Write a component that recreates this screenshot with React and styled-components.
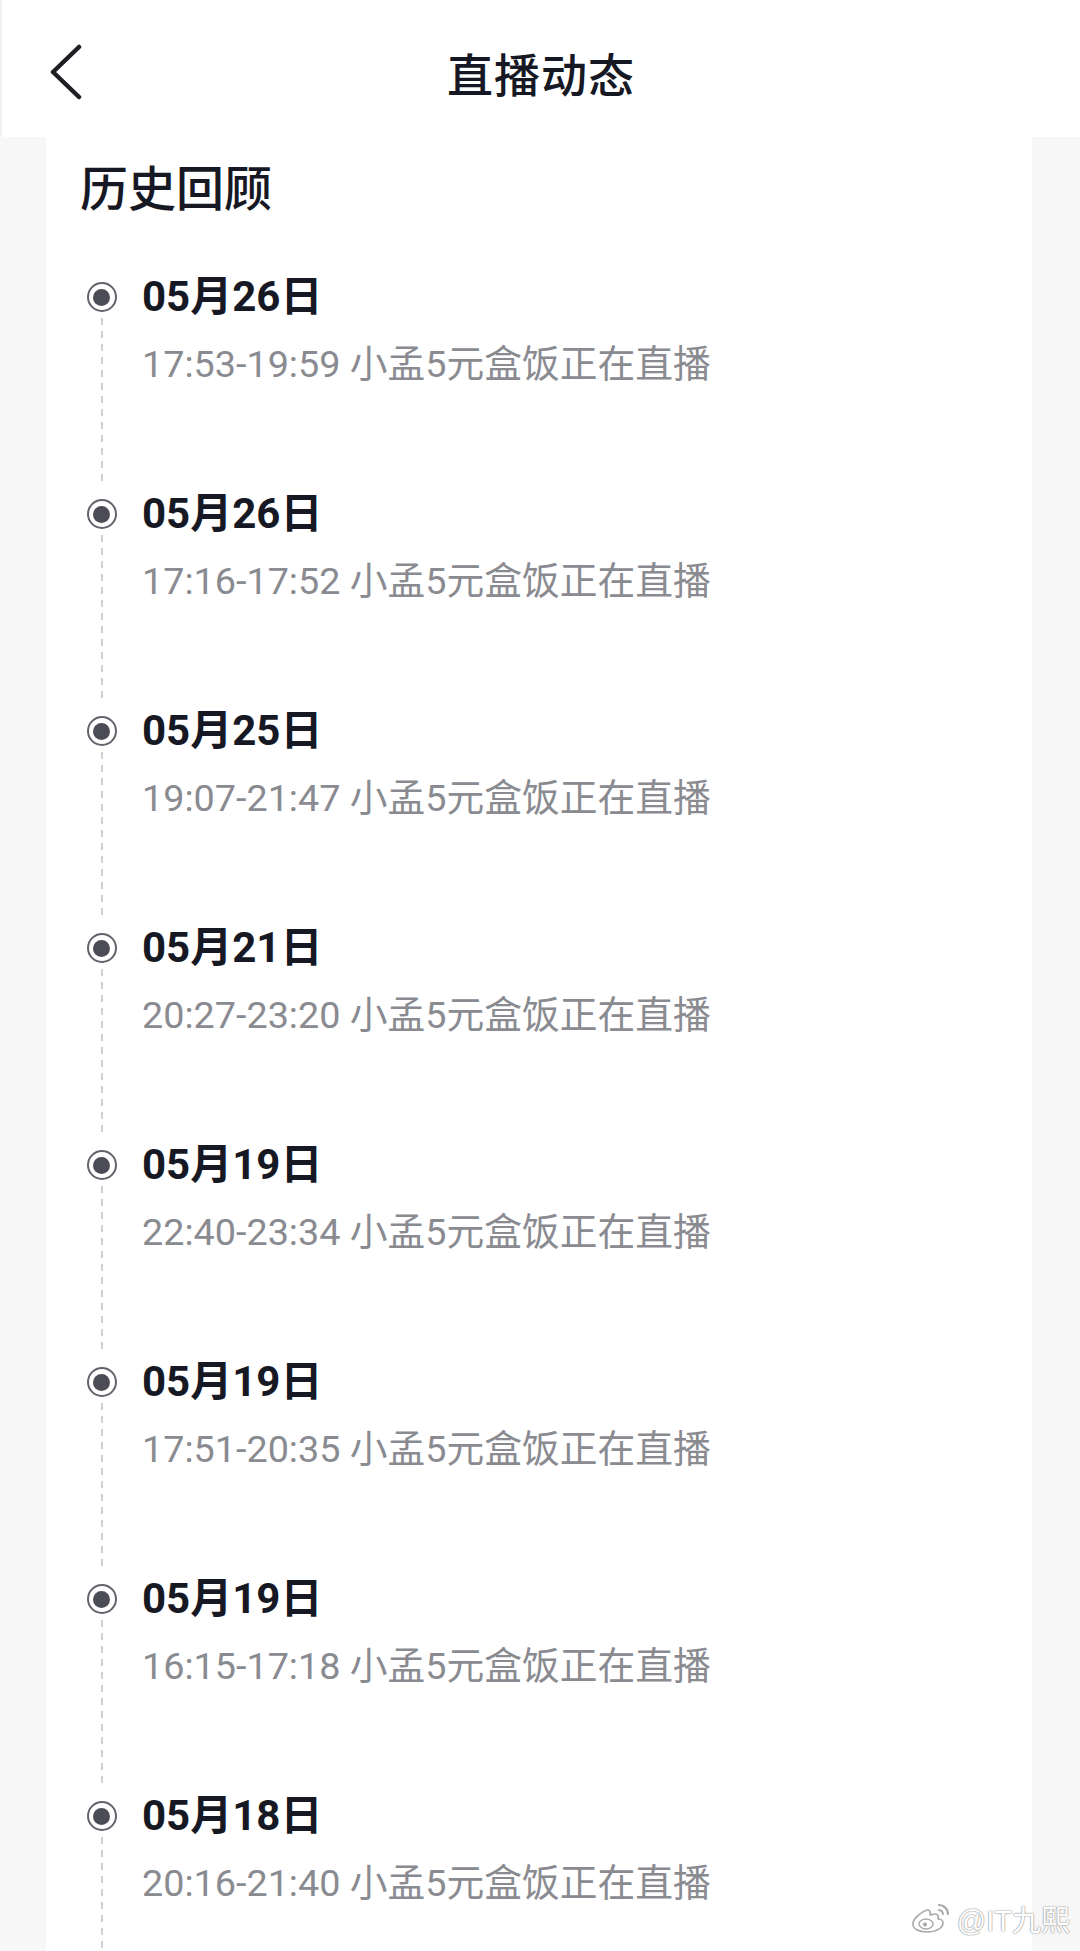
import React from "react";
import styled, { createGlobalStyle } from "styled-components";

const Global = createGlobalStyle`
  html, body {
    margin: 0;
    padding: 0;
    overflow: hidden;
    background: #f7f7f7;
  }
  body {
    font-family: Roboto, "Noto Sans CJK SC", "Noto Sans", sans-serif;
    -webkit-font-smoothing: antialiased;
  }
`;

const Page = styled.div`
  position: relative;
  width: 1080px;
  height: 1951px;
  overflow: hidden;
  display: flex;
  flex-direction: column;
  background: #f7f7f7;
`;

const Header = styled.header`
  height: 137px;
  flex: none;
  background: #ffffff;
  display: grid;
  grid-template-columns: 1fr auto 1fr;
  align-items: center;
  padding: 6px 0 0 0;
  box-sizing: border-box;
  border-left: 2px solid #f2f2f2;
`;

const BackButton = styled.button`
  justify-self: start;
  margin-left: 44px;
  width: 40px;
  height: 60px;
  padding: 0;
  border: 0;
  background: none;
  display: flex;
  align-items: center;
  justify-content: center;
  color: #1e1f24;
`;

const Title = styled.h1`
  margin: 0;
  font-family: "Noto Sans CJK SC", sans-serif;
  font-size: 46px;
  font-weight: 500;
  color: #161823;
  letter-spacing: 1px;
`;

const Body = styled.main`
  flex: 1;
  margin: 0 48px 0 46px;
  background: #ffffff;
  padding: 16px 0 0 34px;
  display: flex;
  flex-direction: column;
`;

const SectionTitle = styled.h2`
  margin: 0 0 52px;
  font-family: "Noto Sans CJK SC", sans-serif;
  font-size: 48px;
  line-height: 64px;
  font-weight: 500;
  color: #161823;
`;

const Timeline = styled.ol`
  list-style: none;
  margin: 0;
  padding: 0 0 0 6px;
`;

const Item = styled.li`
  height: 217px;
  display: flex;
  gap: 25px;
`;

const Rail = styled.div`
  width: 31px;
  flex: none;
  display: flex;
  flex-direction: column;
  align-items: center;
  padding-top: 13px;
`;

const Dot = styled.span`
  width: 30px;
  height: 30px;
  box-sizing: border-box;
  border-radius: 50%;
  border: 2px solid #62636b;
  display: flex;
  align-items: center;
  justify-content: center;
  flex: none;

  &::after {
    content: "";
    width: 17px;
    height: 17px;
    border-radius: 50%;
    background: #4b4c56;
  }
`;

const Line = styled.span`
  flex: 1;
  width: 2px;
  margin: 6px 0 0;
  background-image: linear-gradient(to bottom, #cfcfd2 0 7px, transparent 7px 13px);
  background-size: 2px 13px;
  background-repeat: repeat-y;
`;

const Content = styled.div`
  display: flex;
  flex-direction: column;
  gap: 14px;
`;

const DateText = styled.div`
  font-size: 42px;
  line-height: 56px;
  font-weight: 700;
  color: #161823;
`;

const TimeText = styled.div`
  font-size: 37.75px;
  line-height: 50px;
  font-weight: 400;
  color: #8a8b91;
`;

const Watermark = styled.div`
  position: absolute;
  right: 10px;
  bottom: 12px;
  display: flex;
  align-items: center;
  gap: 5px;
  font-family: "Liberation Sans", "Noto Sans CJK SC", sans-serif;
  font-size: 29px;
  color: #ffffff;
  text-shadow: 0 0 1px #9a9a9a, 0 0 1px #9a9a9a, 0 0 2px #b0b0b0;
`;

const items = [
  ["05月26日", "17:53-19:59"],
  ["05月26日", "17:16-17:52"],
  ["05月25日", "19:07-21:47"],
  ["05月21日", "20:27-23:20"],
  ["05月19日", "22:40-23:34"],
  ["05月19日", "17:51-20:35"],
  ["05月19日", "16:15-17:18"],
  ["05月18日", "20:16-21:40"],
];

function Chevron() {
  return (
    <svg width="34" height="56" viewBox="0 0 34 56" fill="none">
      <polyline
        points="30,3 4,28 30,53"
        stroke="currentColor"
        strokeWidth="4.5"
        strokeLinecap="round"
        strokeLinejoin="round"
      />
    </svg>
  );
}

function WeiboLogo() {
  return (
    <svg width="42" height="32" viewBox="0 0 42 32">
      <path
        d="M17 8c-6 2-13 8-14 13-1 6 6 9 14 9 9 0 16-4 16-9 0-3-3-4-5-4 1-3 0-5-3-5-2 0-4 1-5 1 1-3-1-6-3-5z"
        fill="#fff"
        stroke="#a8a8a8"
        strokeWidth="1.6"
        strokeLinejoin="round"
      />
      <ellipse cx="16" cy="22" rx="7" ry="5" fill="#fff" stroke="#a8a8a8" strokeWidth="1.4" />
      <circle cx="15" cy="22.5" r="2" fill="#a8a8a8" />
      <path d="M29 3c5 0 9 4 9 9" fill="none" stroke="#a8a8a8" strokeWidth="2.2" strokeLinecap="round" />
      <path d="M29 8c2 0 4 2 4 4" fill="none" stroke="#a8a8a8" strokeWidth="2" strokeLinecap="round" />
    </svg>
  );
}

export default function App() {
  return (
    <Page>
      <Global />
      <Header>
        <BackButton aria-label="返回">
          <Chevron />
        </BackButton>
        <Title>直播动态</Title>
        <span />
      </Header>
      <Body>
        <SectionTitle>历史回顾</SectionTitle>
        <Timeline>
          {items.map(([date, time], i) => (
            <Item key={i}>
              <Rail>
                <Dot />
                <Line />
              </Rail>
              <Content>
                <DateText>{date}</DateText>
                <TimeText>{time} 小孟5元盒饭正在直播</TimeText>
              </Content>
            </Item>
          ))}
        </Timeline>
      </Body>
      <Watermark>
        <WeiboLogo />
        <span>@IT九熙</span>
      </Watermark>
    </Page>
  );
}
